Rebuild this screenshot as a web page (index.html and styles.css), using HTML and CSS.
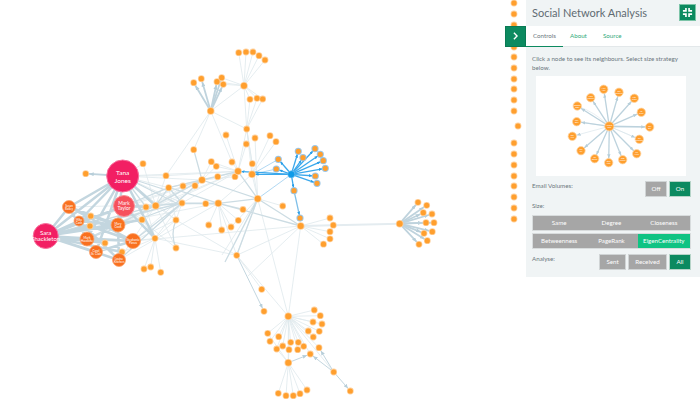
FILE: index.html
```html
<!DOCTYPE html>
<html lang="en">
<head>
<meta charset="utf-8">
<title>Social Network Analysis</title>
<link rel="stylesheet" href="styles.css">
</head>
<body>
<main class="stage">
  <svg class="graph" viewBox="0 0 700 400" width="700" height="400" aria-label="Network chart">
    <defs>
      <marker id="ag" markerUnits="userSpaceOnUse" markerWidth="4.5" markerHeight="4" refX="8" refY="2" orient="auto"><path class="head-g" d="M0 0L4.5 2L0 4z"/></marker>
      <marker id="ab" markerUnits="userSpaceOnUse" markerWidth="3.5" markerHeight="3" refX="6.5" refY="1.5" orient="auto"><path class="head-b" d="M0 0L3.5 1.5L0 3z"/></marker>
      <path id="sm" d="M238.7 52.7h0M246 52h0M253 52h0M259 55.7h0M265 60h0M221.7 77.7h0M217 81.7h0M223.3 84.3h0M201.3 78.7h0M193.7 82.7h0M250 99.3h0M257 98.3h0M262.7 99h0M246.7 129h0M226 135h0M255 138h0M246.3 144h0M270 135.7h0M276 141.7h0M193.7 149.7h0M143 163.7h0M85.7 173.7h0M166 175.7h0M183 186h0M168.7 187.7h0M211.3 161.7h0M216.3 166.3h0M232 162h0M252.3 163.7h0M217.7 176.7h0M235 176.7h0M195 185.7h0M146 207h0M182 203h0M205.7 203.7h0M142 219.7h0M176 220h0M90.7 216h0M90 226h0M155 238.3h0M176 248h0M105 243h0M122 252h0M144 269h0M150.7 267h0M160.7 272.3h0M243 209.5h0M282.7 206h0M238.3 220.3h0M231 227h0M221.7 230h0M208.7 225h0M236.7 255.3h0M330 218h0M333.3 225.2h0M330 231.7h0M330 238.8h0M323.5 244.2h0M418 202.3h0M426.7 205.3h0M423.3 212.7h0M432 214h0M426 222.7h0M434 222.7h0M424 233.3h0M432.3 231.7h0M427.3 240.7h0M419 244.3h0M261.7 289.3h0M264 311.3h0M314.3 310h0M320.3 315.7h0M313 322h0M322 324h0M308.3 331h0M319.3 331.3h0M313.3 337h0M267.7 333.3h0M278.7 336.7h0M270 341.3h0M290.7 342.3h0M298.3 342.3h0M303.7 346.3h0M282.7 346h0M276.7 349h0M289 349.7h0M297.7 349.7h0M319 347.7h0M310.3 354h0M333.7 372h0M350.3 391h0M278.3 393.3h0M286 395.7h0M293.3 395.7h0M300 393.7h0M307 390h0M514 3h0M514 14h0M514 25h0M514 47h0M514 57h0M514 68h0M514 79h0M514 89h0M514 100h0M514 111h0M518 126h0M514 143h0M514 154h0M514 165h0M514 176h0M514 186h0M514 197h0M514 208h0M514 219h0"/>
      <path id="hub" d="M244 85.7h0M210.7 111h0M238 171.3h0M252 174.3h0M202 180h0M155.7 205.7h0M218.3 203.3h0M257.7 198.7h0M300.7 226h0M399.7 223.7h0M288.3 316.3h0M288.3 362.7h0"/>
      <path id="bl" d="M278.3 159.3h0M276.3 169h0M298.3 151.3h0M303 157.7h0M315 148.7h0M320.3 154.3h0M323.3 160.7h0M325.3 168.3h0M315.3 176h0M317 183.3h0M294 190.7h0M300 218h0"/>
    </defs>

    <path class="e-thin" d="M244 85.7L238.7 52.7M244 85.7L246 52M244 85.7L253 52M244 85.7L259 55.7M244 85.7L265 60M244 85.7L221.7 77.7M244 85.7L217 81.7M244 85.7L223.3 84.3M244 85.7L250 99.3M244 85.7L257 98.3M244 85.7L262.7 99M244 85.7L246.7 129M244 85.7L210.7 111M246.7 129L250 99.3M246.7 129L257 98.3M246.7 129L262.7 99M246.7 129L238 171.3M246.7 129L252.3 163.7M246.7 129L257.7 198.7M246.7 129L252 174.3M210.7 111L246.7 129M210.7 111L193.7 149.7M210.7 111L232 162M210.7 111L166 175.7M255 138L257.7 198.7M246.3 144L238 171.3M270 135.7L252 174.3M276 141.7L252 174.3M226 135L238 171.3M211.3 161.7L202 180M211.3 161.7L238 171.3M216.3 166.3L238 171.3M216.3 166.3L202 180M232 162L238 171.3M217.7 176.7L202 180M217.7 176.7L238 171.3M235 176.7L202 180M252 174.3L218.3 203.3M252 174.3L257.7 198.7M238 171.3L182 203M238 171.3L155.7 205.7M202 180L168.7 187.7M202 180L183 186M202 180L155.7 205.7M202 180L146 207M218.3 203.3L208.7 225M218.3 203.3L221.7 230M218.3 203.3L231 227M218.3 203.3L238.3 220.3M218.3 203.3L236.7 255.3M257.7 198.7L231 227M257.7 198.7L282.7 206M257.7 198.7L288.3 316.3M257.7 198.7L222 255M257.7 198.7L236.7 255.3M236.7 255.3L288.3 316.3M236.7 255.3L261.7 289.3M236.7 255.3L300.7 226M236.7 255.3L176 220M236.7 255.3L155 238.3M182 203L176 220M155 238.3L144 269M155 238.3L150.7 267M155 238.3L160.7 272.3M155 238.3L176 220M155 238.3L142 219.7M155 238.3L146 207M155 238.3L133 241M155 238.3L122 252M155 238.3L182 203M142 219.7L155.7 205.7M176 220L168.7 187.7M176 248L155.7 205.7M300.7 226L330 218M300.7 226L333.3 225.2M300.7 226L330 231.7M300.7 226L330 238.8M300.7 226L323.5 244.2M300.7 226L300 218M300.7 226L288.3 316.3M300.7 226L248 276M288.3 316.3L314.3 310M288.3 316.3L320.3 315.7M288.3 316.3L313 322M288.3 316.3L322 324M288.3 316.3L308.3 331M288.3 316.3L319.3 331.3M288.3 316.3L313.3 337M288.3 316.3L267.7 333.3M288.3 316.3L278.7 336.7M288.3 316.3L270 341.3M288.3 316.3L290.7 342.3M288.3 316.3L298.3 342.3M288.3 316.3L303.7 346.3M288.3 316.3L282.7 346M288.3 316.3L276.7 349M288.3 316.3L289 349.7M288.3 316.3L297.7 349.7M288.3 316.3L319 347.7M288.3 316.3L310.3 354M288.3 316.3L288.3 362.7M288.3 316.3L333.7 372M288.3 362.7L276.7 349M288.3 362.7L267.7 333.3M288.3 362.7L289 349.7M288.3 362.7L278.3 393.3M288.3 362.7L286 395.7M288.3 362.7L293.3 395.7M288.3 362.7L300 393.7M288.3 362.7L307 390M122.7 176L182 203M122.7 176L202 180M122.7 176L168.7 187.7M122.7 176L166 175.7M122.7 176L143 163.7M122.7 176L176 220M122.7 176L238 171.3M124 206L202 180M124 206L182 203M124 206L176 248M143 163.7L155.7 205.7M166 175.7L155.7 205.7M183 186L155.7 205.7M183 186L202 180M166 175.7L238 171.3M133 241L176 220M133 241L202 180M119 260L155.7 205.7M118 225L238 171.3M87 239L202 180M45.7 236L202 180M45.7 236L218.3 203.3M69 207L218.3 203.3M119 260L218.3 203.3M133 241L300.7 226M155.7 205.7L176 220"/>

    <path class="e-pale" d="M300.7 226L399.7 223.7"/>

    <path class="e-med" d="M182 203L218.3 203.3M218.3 203.3L257.7 198.7M218.3 203.3L243 209.5M218.3 203.3L300.7 226M257.7 198.7L300.7 226M202 180L257.7 198.7M202 180L195 185.7M193.7 149.7L202 180M155.7 205.7L182 203M155.7 205.7L168.7 187.7M155.7 205.7L146 207M182 203L205.7 203.7M205.7 203.7L218.3 203.3M238 171.3L202 180M238 171.3L168.7 187.7M218.3 203.3L168 187M257.7 198.7L236.7 255.3M257.7 198.7L225 262M257.7 198.7L238 171.3M176 248Q170 234 176 220M202 180L176 203M168.7 187.7L183 204M124 206L155.7 205.7M124 206L168.7 187.7M122.7 176L166 190M133 241L182 203M119 260L182 203M118 225L202 180M87 239L182 203M87 239L155.7 205.7M45.7 236L155.7 205.7M45.7 236L182 203M122.7 176L146 207M122.7 176L176 203"/>

    <path class="e-thick" d="M122.7 176L69 207M122.7 176L79 221M122.7 176L45.7 236M122.7 176L87 239M122.7 176L118 225M122.7 176L96 252M122.7 176L155.7 205.7M45.7 236L69 207M45.7 236L79 221M45.7 236L87 239M45.7 236L96 252M45.7 236L118 225M45.7 236L133 241M45.7 236L119 260M45.7 236L124 206M45.7 236L90.7 216M45.7 236L90 226M45.7 236L105 243M118 225L119 260M124 206L118 225M69 207L87 239M124 206L155 238.3M124 206L146 207M79 221L118 225M69 207L118 225M87 239L133 241M96 252L133 241M122.7 176L155 238.3M69 207L133 241M79 221L119 260M45.7 236L142 219.7M45.7 236L122 252M90 226L133 241M90.7 216L118 225"/>

    <g class="e-arrow" marker-end="url(#ag)">
      <path d="M399.7 223.7L418 202.3"/><path d="M399.7 223.7L426.7 205.3"/><path d="M399.7 223.7L423.3 212.7"/><path d="M399.7 223.7L432 214"/><path d="M399.7 223.7L426 222.7"/><path d="M399.7 223.7L434 222.7"/><path d="M399.7 223.7L424 233.3"/><path d="M399.7 223.7L432.3 231.7"/><path d="M399.7 223.7L427.3 240.7"/><path d="M399.7 223.7L419 244.3"/>
      <path d="M210.7 111L201.3 78.7"/><path d="M210.7 111L193.7 82.7"/><path d="M210.7 111L217 81.7"/><path d="M210.7 111L221.7 77.7"/><path d="M210.7 111L223.3 84.3"/>
      <path d="M122.7 176L85.7 173.7"/>
    </g>
    <g class="e-arrow-thin" marker-end="url(#ag)">
      <path d="M288.3 362.7L310.3 354"/><path d="M333.7 372L319 347.7"/><path d="M333.7 372L310.3 354"/><path d="M333.7 372L350.3 391"/><path d="M236.7 255.3L264 311.3"/>
    </g>

    <path class="e-blue-soft" d="M257.7 198.7L291.3 174.3M278.3 159.3L252 174.3M276.3 169L252 174.3"/>
    <g class="e-blue" marker-end="url(#ab)">
      <path d="M291.3 174.3L278.3 159.3"/><path d="M291.3 174.3L276.3 169"/><path d="M291.3 174.3L298.3 151.3"/><path d="M291.3 174.3L303 157.7"/><path d="M291.3 174.3L315 148.7"/><path d="M291.3 174.3L320.3 154.3"/><path d="M291.3 174.3L323.3 160.7"/><path d="M291.3 174.3L325.3 168.3"/><path d="M291.3 174.3L315.3 176"/><path d="M291.3 174.3L317 183.3"/><path d="M291.3 174.3L294 190.7"/><path d="M291.3 174.3L252 174.3"/><path d="M291.3 174.3L238 171.3"/><path class="e-blue-fade" d="M294 190.7L300 218"/>
    </g>

    <use href="#sm" class="n-sm-halo"/><use href="#sm" class="n-sm"/>
    <use href="#hub" class="n-hub-halo"/><use href="#hub" class="n-hub"/>
    <use href="#bl" class="n-bl-halo"/><use href="#bl" class="n-bl"/>
    <circle class="n-center" cx="291.3" cy="174.3" r="3.6"/>

    <circle class="big-pink" cx="122.7" cy="176" r="16"/>
    <text class="lbl-l"><tspan x="122.7" y="175.2">Tana</tspan><tspan x="122.7" y="182.8">Jones</tspan></text>
    <circle class="big-pink" cx="45.7" cy="236" r="12.5"/>
    <text class="lbl-m"><tspan x="45.7" y="235">Sara</tspan><tspan x="45.7" y="240.6">Shackleton</tspan></text>
    <circle class="big-coral" cx="124" cy="206" r="10.5"/>
    <text class="lbl-s"><tspan x="124" y="205.4">Mark</tspan><tspan x="124" y="210.2">Taylor</tspan></text>
    <circle class="big-or" cx="69" cy="207" r="6.5"/>
    <text class="lbl-t"><tspan x="69" y="206.5">Susan</tspan><tspan x="69" y="209.8">Bailey</tspan></text>
    <circle class="big-or" cx="79" cy="221" r="5"/>
    <text class="lbl-t"><tspan x="79" y="220.5">Mike</tspan><tspan x="79" y="223.5">Cash</tspan></text>
    <circle class="big-or" cx="118" cy="225" r="7"/>
    <text class="lbl-t"><tspan x="118" y="224.5">Mary</tspan><tspan x="118" y="228">Cook</tspan></text>
    <circle class="big-or" cx="87" cy="239" r="7"/>
    <text class="lbl-t"><tspan x="87" y="238.5">Mark</tspan><tspan x="87" y="242">Haedicke</tspan></text>
    <circle class="big-or" cx="133" cy="241" r="7.5"/>
    <text class="lbl-t"><tspan x="133" y="240.5">Stephanie</tspan><tspan x="133" y="244">Panus</tspan></text>
    <circle class="big-or" cx="96" cy="252" r="6.5"/>
    <text class="lbl-t"><tspan x="96" y="251.5">Carol</tspan><tspan x="96" y="255">St. Clair</tspan></text>
    <circle class="big-or" cx="119" cy="260" r="6.5"/>
    <text class="lbl-t"><tspan x="119" y="259.5">Louise</tspan><tspan x="119" y="263">Kitchen</tspan></text>
  </svg>

  <aside class="panel">
    <header class="panel-head">
      <h1 class="panel-title">Social Network Analysis</h1>
      <button class="icon-btn" aria-label="Collapse">
        <svg viewBox="0 0 12 12" width="11" height="11"><path class="icon-line" d="M4.3 1v3.3H1M7.7 1v3.3H11M4.3 11V7.7H1M7.7 11V7.7H11"/></svg>
      </button>
    </header>
    <nav class="tabs">
      <button class="toggle" aria-label="Toggle panel">
        <svg viewBox="0 0 6 10" width="5" height="8"><path class="toggle-line" d="M1 1l4 4-4 4"/></svg>
      </button>
      <a class="tab tab-active">Controls</a>
      <a class="tab">About</a>
      <a class="tab">Source</a>
    </nav>
    <div class="panel-body">
      <p class="intro">Click a node to see its neighbours. Select size strategy below.</p>
      <div class="mini">
        <svg viewBox="536 76 150 100" width="150" height="100" aria-label="Node neighbours">
          <defs>
            <marker id="am" markerUnits="userSpaceOnUse" markerWidth="4" markerHeight="3.4" refX="8.5" refY="1.7" orient="auto"><path class="head-g" d="M0 0L4 1.7L0 3.4z"/></marker>
          </defs>
          <path class="m-soft" d="M609.3 126.3Q595 112 577.3 106M609.3 126.3L576.7 121.7M609.3 126.3L639.3 139.3"/>
          <g class="m-edge" marker-end="url(#am)">
            <path d="M609.3 126.3L603.7 89.3"/><path d="M609.3 126.3L619 92.3"/><path d="M609.3 126.3L634.3 98.3"/><path d="M609.3 126.3L641.3 112.3"/><path class="m-wide" d="M609.3 126.3L649.7 127"/><path d="M609.3 126.3L636.7 153.7"/><path d="M609.3 126.3L622.7 159.7"/><path d="M609.3 126.3L608.7 162.7"/><path d="M609.3 126.3L594.7 158.7"/><path d="M609.3 126.3L581 150.7"/><path class="m-thin" d="M609.3 126.3L572.3 136.3"/><path d="M609.3 126.3L576.7 121.7"/><path d="M609.3 126.3L577.3 106"/><path d="M609.3 126.3L590.7 97.7"/><path class="m-thin" d="M609.3 126.3L639.3 139.3"/>
          </g>
          <g class="m-nodes">
            <circle cx="609.3" cy="126.3" r="4.6"/><circle cx="603.7" cy="89.3" r="4.2"/><circle cx="619" cy="92.3" r="4.2"/><circle cx="634.3" cy="98.3" r="4.2"/><circle cx="641.3" cy="112.3" r="4.2"/><circle cx="649.7" cy="127" r="4.2"/><circle cx="639.3" cy="139.3" r="4.2"/><circle cx="636.7" cy="153.7" r="4.2"/><circle cx="622.7" cy="159.7" r="4.2"/><circle cx="608.7" cy="162.7" r="4.2"/><circle cx="594.7" cy="158.7" r="4.2"/><circle cx="581" cy="150.7" r="4.2"/><circle cx="572.3" cy="136.3" r="4.2"/><circle cx="576.7" cy="121.7" r="4.2"/><circle cx="577.3" cy="106" r="4.2"/><circle cx="590.7" cy="97.7" r="4.2"/>
          </g>
          <g class="m-labels">
            <text><tspan x="609.3" y="126">Michelle</tspan><tspan x="609.3" y="128.2">Cash</tspan></text>
            <text><tspan x="603.7" y="89">Mary</tspan><tspan x="603.7" y="91">Hain</tspan></text>
            <text><tspan x="619" y="92">Sara</tspan><tspan x="619" y="94">Dasovich</tspan></text>
            <text><tspan x="634.3" y="98">Kate</tspan><tspan x="634.3" y="100">Symes</tspan></text>
            <text><tspan x="641.3" y="112">Liz</tspan><tspan x="641.3" y="114">Taylor</tspan></text>
            <text><tspan x="649.7" y="126.7">Rick</tspan><tspan x="649.7" y="128.7">Buy</tspan></text>
            <text><tspan x="639.3" y="139">Jeff</tspan><tspan x="639.3" y="141">Shankman</tspan></text>
            <text><tspan x="636.7" y="153.4">Kay</tspan><tspan x="636.7" y="155.4">Mann</tspan></text>
            <text><tspan x="622.7" y="159.4">Greg</tspan><tspan x="622.7" y="161.4">Whalley</tspan></text>
            <text><tspan x="608.7" y="162.4">Steve</tspan><tspan x="608.7" y="164.4">Kean</tspan></text>
            <text><tspan x="594.7" y="158.4">Jim</tspan><tspan x="594.7" y="160.4">Derrick</tspan></text>
            <text><tspan x="581" y="150.4">Ken</tspan><tspan x="581" y="152.4">Lay</tspan></text>
            <text><tspan x="572.3" y="136">Dan</tspan><tspan x="572.3" y="138">Hyvl</tspan></text>
            <text><tspan x="576.7" y="121.4">Sally</tspan><tspan x="576.7" y="123.4">Beck</tspan></text>
            <text><tspan x="577.3" y="105.7">Elizabeth</tspan><tspan x="577.3" y="107.7">Sager</tspan></text>
            <text><tspan x="590.7" y="97.4">Vince</tspan><tspan x="590.7" y="99.4">Kaminski</tspan></text>
          </g>
        </svg>
      </div>
      <div class="row row-email">
        <span class="label">Email Volumes:</span>
        <div class="btns"><button class="btn">Off</button><button class="btn btn-on">On</button></div>
      </div>
      <span class="label label-size">Size:</span>
      <div class="seg">
        <button class="seg-btn">Same</button><button class="seg-btn">Degree</button><button class="seg-btn">Closeness</button>
      </div>
      <div class="seg seg-second">
        <button class="seg-btn">Betweenness</button><button class="seg-btn">PageRank</button><button class="seg-btn seg-active">EigenCentrality</button>
      </div>
      <div class="row row-analyse">
        <span class="label">Analyse:</span>
        <div class="btns"><button class="btn btn-sent">Sent</button><button class="btn btn-rec">Received</button><button class="btn btn-on">All</button></div>
      </div>
    </div>
  </aside>
</main>
</body>
</html>
```
FILE: styles.css
```css
* { box-sizing: border-box; }
html, body { margin: 0; padding: 0; background: #fff; }
body { font-family: Lato, "Noto Sans", sans-serif; overflow: hidden; }
.stage { position: relative; width: 700px; height: 400px; overflow: hidden; }
.graph { position: absolute; left: 0; top: 0; display: block; }

.e-thin { fill: none; stroke: #dee8ec; stroke-width: .8; }
.e-pale { fill: none; stroke: #e4ecf0; stroke-width: 2; }
.e-med { fill: none; stroke: #ccdce3; stroke-width: 1.3; }
.e-thick { fill: none; stroke: #c3d6df; stroke-width: 2.5; }
.e-arrow path { fill: none; stroke: #bfd3dd; stroke-width: 1.8; }
.e-arrow-thin path { fill: none; stroke: #c3d6df; stroke-width: 1; }
.e-blue path { fill: none; stroke: #3aa8ec; stroke-width: 1.3; }
.e-blue .e-blue-fade { stroke: #7fbfe8; }
.e-blue-soft { fill: none; stroke: #a8d4f0; stroke-width: .9; }
.head-g { fill: #b7ced9; }
.head-b { fill: #2a9fe8; }

.n-sm-halo, .n-hub-halo, .n-bl-halo { fill: none; stroke-linecap: round; }
.n-sm, .n-hub, .n-bl { fill: none; stroke: #ff9f2e; stroke-linecap: round; }
.n-sm-halo { stroke: #ffcf99; stroke-width: 6.8; }
.n-sm { stroke-width: 5.2; }
.n-hub-halo { stroke: #ffcf99; stroke-width: 7.6; }
.n-hub { stroke-width: 6; }
.n-bl-halo { stroke: #9cc6e6; stroke-width: 7.2; }
.n-bl { stroke-width: 5.2; }
.n-center { fill: #0f9be8; stroke: #7fc4ef; stroke-width: .6; }

.big-pink { fill: #f21f63; stroke: #f76f9c; stroke-width: 1; }
.big-coral { fill: #f6505c; stroke: #f98f96; stroke-width: 1; }
.big-or { fill: #f9701f; stroke: #fba46f; stroke-width: .8; }
.graph text { fill: #fff; text-anchor: middle; }
.lbl-l { font-size: 6.5px; }
.lbl-m { font-size: 6px; }
.lbl-s { font-size: 5px; }
.lbl-t { font-size: 3px; }

.panel { position: absolute; top: 0; right: 0; width: 174px; height: 277px; background: #f0f4f5; display: flex; flex-direction: column; }
.panel-head { height: 26px; display: flex; align-items: center; justify-content: space-between; padding: 0 4px 2px 6px; }
.panel-title { margin: 0; font-size: 11px; font-weight: 400; color: #5f6b72; }
.icon-btn { width: 17px; height: 17px; padding: 0; border: 1px solid #7cc4a8; background: #0c8a60; display: flex; align-items: center; justify-content: center; }
.icon-line { fill: none; stroke: #fff; stroke-width: 1.8; }
.tabs { height: 21px; margin-left: -21px; display: flex; align-items: center; background: #fff; border-bottom: 1px solid #e3e8ea; position: relative; }
.toggle { width: 21px; height: 21px; padding: 0; border: 1px solid #0a7a54; background: #0c8a60; display: flex; align-items: center; justify-content: center; }
.toggle-line { fill: none; stroke: #fff; stroke-width: 1.8; }
.tab { font-size: 6.2px; color: #2fa97a; padding: 0 0 0 7px; width: 33px; height: 21px; line-height: 20px; }
.tab-active { color: #6b787e; width: 37px; border-bottom: 1px solid #0c8a60; }
.panel-body { padding: 7px 9px 0 6px; display: flex; flex-direction: column; }
.intro { margin: 0 0 3.5px; font-size: 6.2px; line-height: 9px; color: #6b777d; }
.mini { width: 150px; height: 100px; margin-left: 4px; background: #fff; }
.mini svg { display: block; }
.m-edge path { fill: none; stroke: #bcd2dd; stroke-width: 1.3; }
.m-edge .m-wide { stroke-width: 1.7; }
.m-edge .m-thin { stroke-width: .6; stroke: #d5e3ea; }
.m-soft { fill: none; stroke: #dfe9ee; stroke-width: .7; }
.m-nodes circle { fill: #ff9f2e; stroke: #ffd5a5; stroke-width: .8; }
.m-labels text { fill: #fff; font-size: 1.7px; text-anchor: middle; }
.row { display: flex; justify-content: space-between; }
.row-email { margin-top: 5px; height: 16px; }
.row-analyse { margin-top: 5px; height: 15px; }
.label { font-size: 6.2px; color: #6b777d; line-height: 9px; }
.label-size { margin-top: 4px; margin-bottom: 5px; }
.btns { display: flex; gap: 2px; }
.btn { height: 16px; width: 22px; padding: 0; border: 1px solid #d0d4d5; background: #a6a6a6; color: #fff; font: 6.2px Lato, "Noto Sans", sans-serif; }
.btn-on { background: #0c8a60; border-color: #b6d4c8; }
.btn-sent { width: 27px; }
.btn-rec { width: 39px; }
.seg { width: 159px; height: 16px; background: #a6a6a6; display: flex; border: 1px solid #d8dcdd; }
.seg-second { margin-top: 2px; }
.seg-btn { flex: 1 1 0; padding: 0; border: 0; background: none; color: #fff; font: 6.2px Lato, "Noto Sans", sans-serif; white-space: nowrap; }
.seg-active { background: #10c383; }
.row-analyse .btn { height: 16px; }
```
